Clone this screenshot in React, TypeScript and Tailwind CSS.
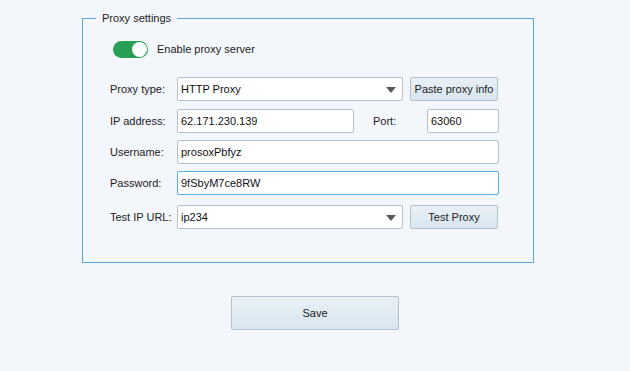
import React from "react";

const font = { fontFamily: '"Liberation Sans", Arial, sans-serif' };

function Arrow() {
  return (
    <svg width="10" height="6" viewBox="0 0 10 6" className="absolute right-[6px] top-[9px]">
      <path d="M0 0 H10 L5 6 Z" fill="#555b60" />
    </svg>
  );
}

function Select({ value, w }: { value: string; w: string }) {
  return (
    <div className={`relative h-[24px] ${w} border border-[#b7c0c9] rounded-[2px] bg-white pl-[3px] flex items-center text-[11px] text-[#111]`}>
      {value}
      <Arrow />
    </div>
  );
}

function Input({ value, w, focused }: { value: string; w: string; focused?: boolean }) {
  return (
    <div
      className={`h-[24px] ${w} border ${focused ? "border-[#55b3e8]" : "border-[#b7c0c9]"} rounded-[2px] bg-white pl-[3px] flex items-center text-[11px] text-[#111]`}
    >
      {value}
    </div>
  );
}

function Btn({ label, w, h }: { label: string; w: string; h: string }) {
  return (
    <div
      className={`${w} ${h} border border-[#b3c1cc] rounded-[2px] bg-gradient-to-b from-[#e9f1f6] to-[#d8e6ef] flex items-center justify-center text-[11px] text-[#1b1b1b]`}
    >
      {label}
    </div>
  );
}

function Label({ text }: { text: string }) {
  return <div className="w-[67px] text-[11px] text-[#1b1b1b]">{text}</div>;
}

export default function App() {
  return (
    <div className="w-full h-[371px] bg-[#f3f6fb] overflow-hidden" style={font}>
      <fieldset className="ml-[82px] mt-[12px] w-[452px] border border-[#5aa8d8] px-0 pb-[33px]">
        <legend className="ml-[13px] px-[6px] text-[11px] leading-[13px] text-[#1b1b1b]">Proxy settings</legend>
        <div className="pl-[27px]">
          <div className="mt-[16px] ml-[3px] flex items-center h-[17px]">
            <div className="relative w-[35px] h-[17px] rounded-full bg-[#27a055]">
              <div className="absolute right-[1px] top-[1px] w-[15px] h-[15px] rounded-full bg-white" />
            </div>
            <span className="ml-[9px] text-[11px] text-[#1b1b1b]">Enable proxy server</span>
          </div>
          <div className="mt-[19px] flex items-center h-[24px]">
            <Label text="Proxy type:" />
            <Select value="HTTP Proxy" w="w-[226px]" />
            <div className="ml-[7px]">
              <Btn label="Paste proxy info" w="w-[88px]" h="h-[24px]" />
            </div>
          </div>
          <div className="mt-[8px] flex items-center h-[24px]">
            <Label text="IP address:" />
            <Input value="62.171.230.139" w="w-[177px]" />
            <div className="ml-[19px] w-[54px] text-[11px] text-[#1b1b1b]">Port:</div>
            <Input value="63060" w="w-[72px]" />
          </div>
          <div className="mt-[7px] flex items-center h-[24px]">
            <Label text="Username:" />
            <Input value="prosoxPbfyz" w="w-[322px]" />
          </div>
          <div className="mt-[7px] flex items-center h-[24px]">
            <Label text="Password:" />
            <Input value="9fSbyM7ce8RW" w="w-[322px]" focused />
          </div>
          <div className="mt-[10px] flex items-center h-[24px]">
            <Label text="Test IP URL:" />
            <Select value="ip234" w="w-[226px]" />
            <div className="ml-[7px]">
              <Btn label="Test Proxy" w="w-[88px]" h="h-[24px]" />
            </div>
          </div>
        </div>
      </fieldset>
      <div className="mt-[33px] flex justify-center">
        <Btn label="Save" w="w-[168px]" h="h-[34px]" />
      </div>
    </div>
  );
}
